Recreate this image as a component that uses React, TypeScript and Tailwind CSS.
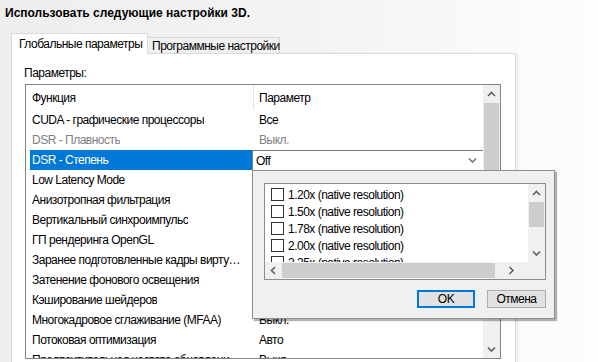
import React from "react";

type Dir = "up" | "down" | "left" | "right";

function Arrow({ dir, color = "#606060" }: { dir: Dir; color?: string }) {
  const pts: Record<Dir, string> = {
    up: "1,5 4.5,1.5 8,5",
    down: "1,1.5 4.5,5 8,1.5",
    left: "5,1 1.5,4.5 5,8",
    right: "1.5,1 5,4.5 1.5,8",
  };
  const wide = dir === "up" || dir === "down";
  return (
    <svg width={wide ? 9 : 7} height={wide ? 7 : 9} viewBox={wide ? "0 0 9 7" : "0 0 7 9"}>
      <polyline points={pts[dir]} fill="none" stroke={color} strokeWidth="1.6" />
    </svg>
  );
}

const rows: { name: string; value: string; disabled?: boolean; combo?: boolean }[] = [
  { name: "CUDA - графические процессоры", value: "Все" },
  { name: "DSR - Плавность", value: "Выкл.", disabled: true },
  { name: "DSR - Степень", value: "Off", combo: true },
  { name: "Low Latency Mode", value: "Выкл." },
  { name: "Анизотропная фильтрация", value: "Управление от приложения" },
  { name: "Вертикальный синхроимпульс", value: "Использовать настройку 3D-приложения" },
  { name: "ГП рендеринга OpenGL", value: "Автовыбор" },
  { name: "Заранее подготовленные кадры виртуальной реальности", value: "1" },
  { name: "Затенение фонового освещения", value: "Выкл." },
  { name: "Кэширование шейдеров", value: "Вкл." },
  { name: "Многокадровое сглаживание (MFAA)", value: "Выкл." },
  { name: "Потоковая оптимизация", value: "Авто" },
  { name: "Предпочтительная частота обновления (Ваш монитор)", value: "Выкл." },
];

const factors = ["1.20x", "1.50x", "1.78x", "2.00x", "2.25x"];

function SettingRow({ row }: { row: (typeof rows)[number] }) {
  if (row.combo) {
    return (
      <div className="flex h-[20px] pl-[4px]">
        <div className="w-[222px] pl-[2px] flex items-center bg-[#0078d7] text-white">{row.name}</div>
        <div className="flex-1 flex items-center justify-between bg-white border-t border-l border-[#7a7a7a] pl-[3px] pr-[6px]">
          <span>{row.value}</span>
          <Arrow dir="down" color="#7a7a7a" />
        </div>
      </div>
    );
  }
  return (
    <div className={`flex h-[20px] pl-[4px] ${row.disabled ? "text-[#808080]" : ""}`}>
      <div className="w-[222px] pl-[2px] pr-[6px] flex items-center overflow-hidden">
        <span className="truncate">{row.name}</span>
      </div>
      <div className="flex-1 pl-[7px] flex items-center whitespace-nowrap overflow-hidden">{row.value}</div>
    </div>
  );
}

function DsrPopup() {
  return (
    <div className="absolute left-[252px] top-[170px] w-[303px] h-[149px] bg-[#f0f0f0] border border-[#8f8f8f] shadow-[2px_2px_1px_rgba(0,0,0,0.3)] pl-[11px] pt-[12px]">
      <div className="w-[282px] h-[97px] border border-[#8c8c8c] bg-white flex flex-col">
        <div className="flex h-[78px]">
          <div className="w-[263px] pt-[2px] overflow-hidden">
            {factors.map((f) => (
              <div key={f} className="h-[17px] flex items-center pl-[6px] gap-[4px] whitespace-nowrap">
                <div className="w-[13px] h-[13px] border border-[#333333] bg-white shrink-0" />
                <span>{f} (native resolution)</span>
              </div>
            ))}
          </div>
          <div className="w-[17px] bg-[#f0f0f0] flex flex-col items-center">
            <div className="h-[18px] flex items-center justify-center">
              <Arrow dir="up" />
            </div>
            <div className="w-[15px] h-[25px] bg-[#cdcdcd]" />
            <div className="flex-1" />
            <div className="h-[17px] flex items-center justify-center">
              <Arrow dir="down" />
            </div>
          </div>
        </div>
        <div className="flex h-[17px]">
          <div className="w-[263px] bg-[#f0f0f0] flex items-center">
            <div className="w-[17px] flex justify-center">
              <Arrow dir="left" />
            </div>
            <div className="w-[213px] h-[15px] bg-[#cdcdcd]" />
            <div className="flex-1 flex justify-center">
              <Arrow dir="right" />
            </div>
          </div>
          <div className="w-[17px] bg-[#f0f0f0]" />
        </div>
      </div>
      <div className="flex justify-end gap-[12px] mt-[10px] pr-[8px]">
        <button className="w-[58px] h-[18px] bg-[#e1e1e1] border border-[#0078d7] outline outline-1 -outline-offset-2 outline-[#0078d7] flex items-center justify-center">
          OK
        </button>
        <button className="w-[59px] h-[18px] bg-[#e1e1e1] border border-[#adadad] flex items-center justify-center">
          Отмена
        </button>
      </div>
    </div>
  );
}

export default function App() {
  return (
    <div className="relative w-[598px] h-[362px] overflow-hidden bg-gradient-to-r from-[#eeeeee] via-[#f3f3f3] to-[#fdfdfd] font-['Liberation_Sans',Arial,sans-serif] text-[12px] leading-[14px] tracking-[-0.5px] text-black">
      <div className="h-[33px] pl-[5px] pt-[6px] font-bold tracking-normal">Использовать следующие настройки 3D.</div>

      <div className="flex items-end h-[20px] pl-[11px] whitespace-nowrap">
        <div className="relative z-10 -mb-px h-[21px] w-[137px] bg-white border border-b-0 border-[#d9d9d9] pl-[7px] flex items-center">
          Глобальные параметры
        </div>
        <div className="h-[16px] w-[132px] bg-[#f0f0f0] border border-l-0 border-b-0 border-[#d9d9d9] pl-[4px] flex items-center">
          Программные настройки
        </div>
      </div>

      <div className="ml-[11px] w-[505px] h-[320px] bg-white border border-[#d9d9d9] shadow-[2px_0_2px_rgba(0,0,0,0.05)]">
        <div className="pl-[12px] pt-[12px] h-[30px]">Параметры:</div>
        <div className="ml-[13px] w-[476px] h-[275px] border border-[#828282] flex">
          <div className="flex-1 overflow-hidden">
            <div className="flex h-[25px]">
              <div className="w-[227px] pl-[6px] flex items-center">Функция</div>
              <div className="flex-1 pl-[5px] flex items-center border-l border-[#e5e5e5]">Параметр</div>
            </div>
            {rows.map((r) => (
              <SettingRow key={r.name} row={r} />
            ))}
          </div>
          <div className="w-[17px] bg-[#f0f0f0] flex flex-col items-center">
            <div className="h-[18px] flex items-center justify-center">
              <Arrow dir="up" />
            </div>
            <div className="w-[15px] h-[110px] bg-[#cdcdcd]" />
            <div className="flex-1" />
            <div className="h-[17px] flex items-center justify-center">
              <Arrow dir="down" />
            </div>
          </div>
        </div>
      </div>

      <DsrPopup />
    </div>
  );
}
